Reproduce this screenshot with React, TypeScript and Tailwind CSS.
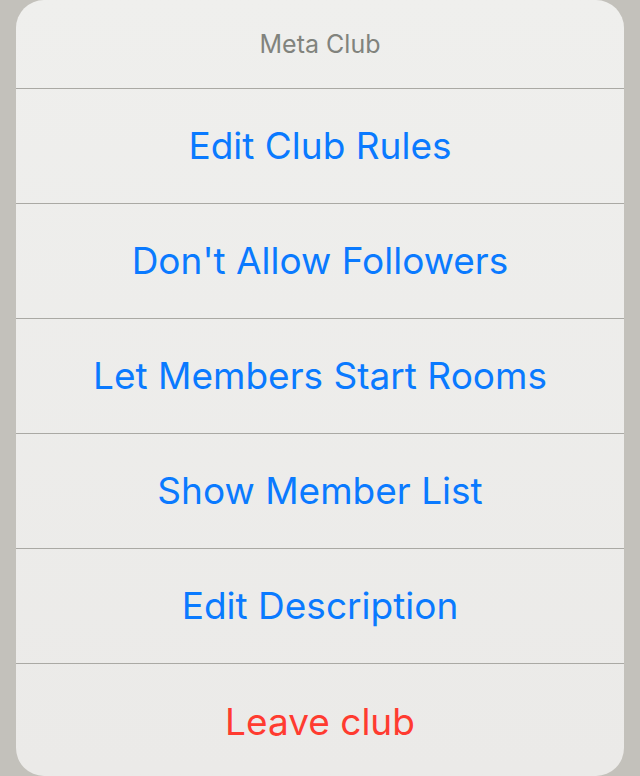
import React from 'react';

const actions = [
  { label: 'Edit Club Rules' },
  { label: "Don't Allow Followers" },
  { label: 'Let Members Start Rooms' },
  { label: 'Show Member List' },
  { label: 'Edit Description' },
  { label: 'Leave club', destructive: true },
];

export default function App() {
  return (
    <div className="w-[640px] h-[776px] bg-[#c3c1bb] px-4 overflow-hidden" style={{ fontFamily: 'Inter, "Noto Sans", sans-serif' }}>
      <div className="h-full rounded-[28px] bg-gradient-to-b from-[#efefed] to-[#ebeae8] flex flex-col overflow-hidden">
        {/* Sheet title */}
        <div className="h-[89px] shrink-0 flex items-center justify-center pt-[2px] border-b border-[#aaa9a4]">
          <span className="text-[25px] text-[#81837d]">Meta Club</span>
        </div>

        {actions.map((a, i) => (
          <button
            key={a.label}
            className={
              'h-[115px] shrink-0 flex items-center justify-center text-[37px] ' +
              (i < actions.length - 1 ? 'border-b border-[#aaa9a4] ' : '') +
              (a.destructive ? 'text-[#ff3b30]' : 'text-[#0a7aff]')
            }
          >
            {a.label}
          </button>
        ))}
      </div>
    </div>
  );
}
